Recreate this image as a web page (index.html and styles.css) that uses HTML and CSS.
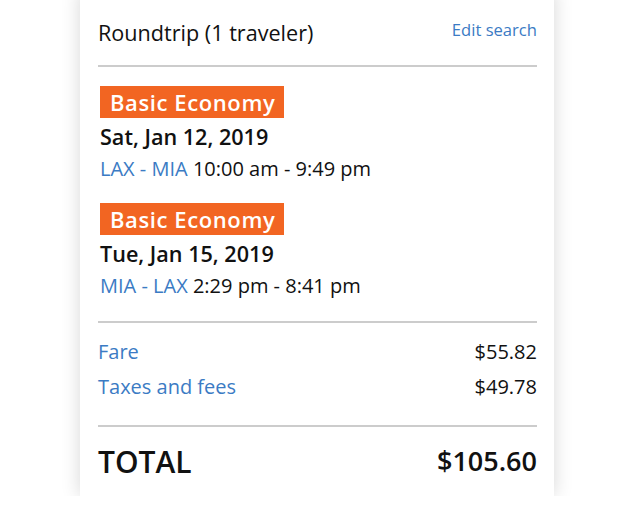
FILE: index.html
```html
<!DOCTYPE html>
<html>
<head>
<meta charset="utf-8">
<link rel="stylesheet" href="styles.css">
</head>
<body>
<div class="card">
  <div class="header">
    <div class="title">Roundtrip (1 traveler)</div>
    <a class="edit">Edit search</a>
  </div>
  <div class="rule rule-top"></div>
  <div class="leg leg-first">
    <div class="badge">Basic Economy</div>
    <div class="date">Sat, Jan 12, 2019</div>
    <div class="route"><span class="link">LAX - MIA</span> 10:00 am - 9:49 pm</div>
  </div>
  <div class="leg leg-second">
    <div class="badge">Basic Economy</div>
    <div class="date">Tue, Jan 15, 2019</div>
    <div class="route"><span class="link">MIA - LAX</span> 2:29 pm - 8:41 pm</div>
  </div>
  <div class="rule rule-mid"></div>
  <div class="row row-fare"><span class="link">Fare</span><span>$55.82</span></div>
  <div class="row row-tax"><span class="link">Taxes and fees</span><span>$49.78</span></div>
  <div class="rule rule-bottom"></div>
  <div class="total"><span class="total-label">TOTAL</span><span class="total-value">$105.60</span></div>
</div>
</body>
</html>
```
FILE: styles.css
```css
html, body {
  margin: 0;
  padding: 0;
  background: #fff;
}
body {
  font-family: "Open Sans", "Noto Sans", sans-serif;
  color: #111;
}
.card {
  margin: -10px 0 0 80px;
  width: 474px;
  box-sizing: border-box;
  padding: 29px 17px 0 18px;
  height: 506px;
  background: #fff;
  box-shadow: 0 0 18px rgba(0, 0, 0, 0.16);
}
.header {
  display: flex;
  justify-content: space-between;
  align-items: flex-start;
  height: 28px;
}
.title {
  font-size: 21.6px;
  line-height: 28px;
}
.edit {
  font-size: 16.6px;
  line-height: 28px;
  color: #3b7bc4;
  margin-top: -3px;
}
.rule {
  height: 2px;
  background: #cccccc;
}
.rule-top { margin-top: 18px; }
.leg { padding-left: 2px; }
.leg-first { margin-top: 19px; }
.leg-second { margin-top: 21px; }
.badge {
  display: inline-block;
  background: #f26522;
  color: #fff;
  font-weight: 600;
  font-size: 22px;
  letter-spacing: 0.6px;
  line-height: 32px;
  height: 32px;
  padding: 0 9px 0 10px;
}
.date {
  margin-top: 5px;
  font-weight: 600;
  font-size: 21.6px;
  line-height: 28px;
}
.route {
  margin-top: 5px;
  font-size: 20px;
  line-height: 26px;
}
.link { color: #3b7bc4; }
.rule-mid { margin-top: 22px; }
.row {
  display: flex;
  justify-content: space-between;
  font-size: 20px;
  line-height: 26px;
}
.row-fare { margin-top: 16px; }
.row-tax { margin-top: 9px; }
.rule-bottom { margin-top: 25px; }
.total {
  display: flex;
  justify-content: space-between;
  align-items: flex-start;
  margin-top: 15px;
}
.total-label {
  font-size: 30px;
  font-weight: 600;
  line-height: 40px;
}
.total-value {
  font-size: 27px;
  font-weight: 600;
  line-height: 36px;
  margin-top: 1px;
}
```
